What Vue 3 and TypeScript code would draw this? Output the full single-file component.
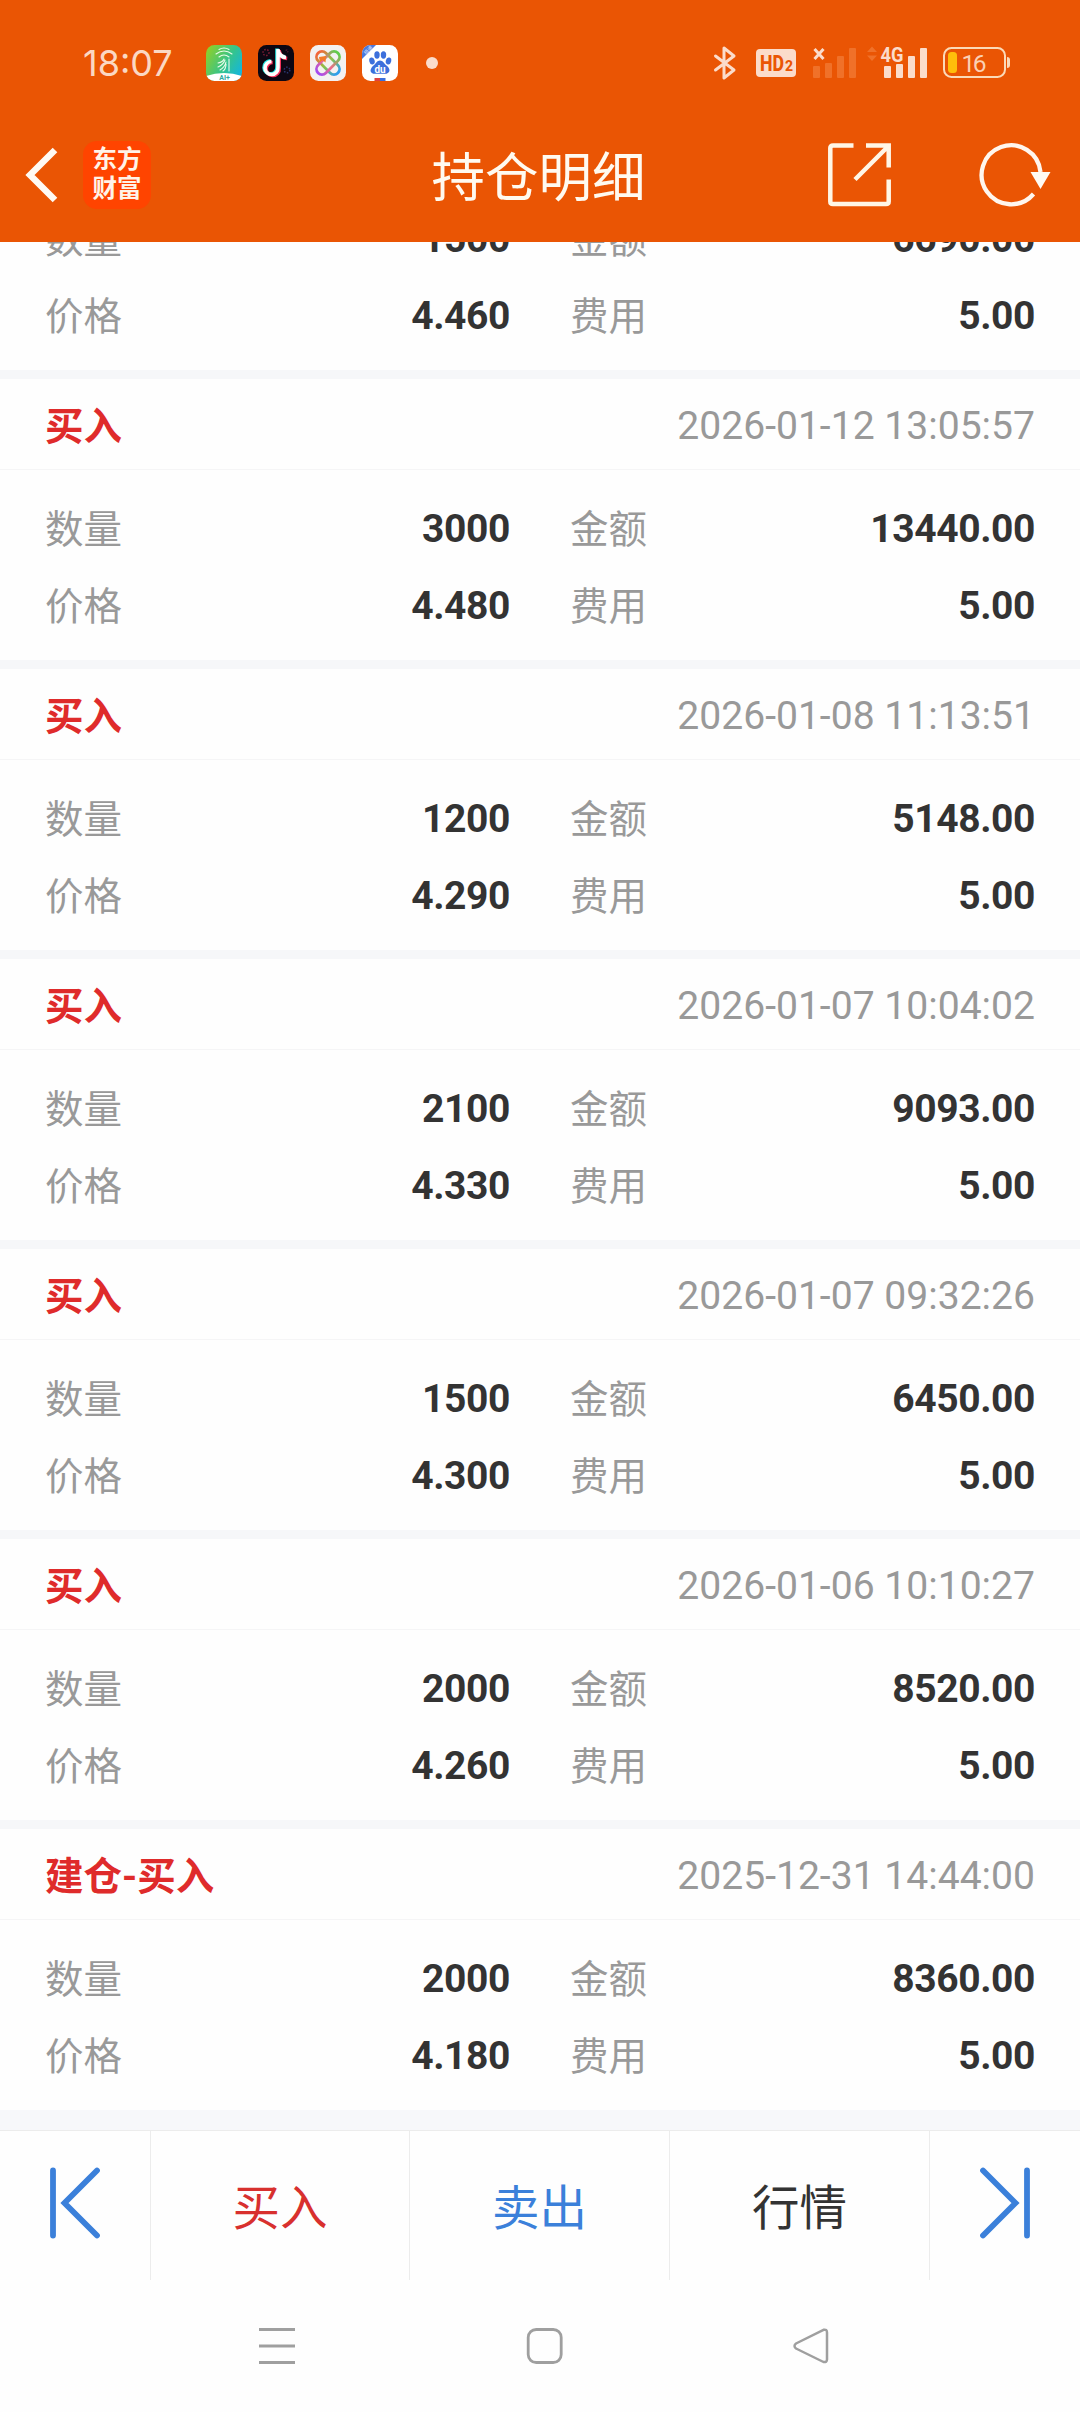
<script setup lang="ts">
interface Trade {
  type?: string
  time?: string
  count: string
  amount: string
  price: string
  fee: string
}

const trades: Trade[] = [
  { count: '1500', amount: '6690.00', price: '4.460', fee: '5.00' },
  { type: '买入', time: '2026-01-12 13:05:57', count: '3000', amount: '13440.00', price: '4.480', fee: '5.00' },
  { type: '买入', time: '2026-01-08 11:13:51', count: '1200', amount: '5148.00', price: '4.290', fee: '5.00' },
  { type: '买入', time: '2026-01-07 10:04:02', count: '2100', amount: '9093.00', price: '4.330', fee: '5.00' },
  { type: '买入', time: '2026-01-07 09:32:26', count: '1500', amount: '6450.00', price: '4.300', fee: '5.00' },
  { type: '买入', time: '2026-01-06 10:10:27', count: '2000', amount: '8520.00', price: '4.260', fee: '5.00' },
  { type: '建仓-买入', time: '2025-12-31 14:44:00', count: '2000', amount: '8360.00', price: '4.180', fee: '5.00' },
]
</script>

<template>
  <div class="screen">
    <header class="top">
      <div class="status">
        <span class="clock">18:07</span>
        <div class="apps">
          <svg width="36" height="36" viewBox="0 0 36 36">
            <defs>
              <linearGradient id="ga" x1="0" y1="0.2" x2="1" y2="0.8">
                <stop offset="0" stop-color="#8ccf2c" />
                <stop offset="0.55" stop-color="#35c48c" />
                <stop offset="1" stop-color="#12b5e2" />
              </linearGradient>
              <clipPath id="ca"><rect width="36" height="36" rx="8.5" /></clipPath>
            </defs>
            <g clip-path="url(#ca)">
              <rect width="36" height="36" fill="url(#ga)" />
              <path d="M0 31Q18 25 36 31V36H0Z" fill="#fff" />
              <g fill="none" stroke="#e9fbe9" stroke-width="1.1" stroke-linecap="round">
                <path d="M13 4.500Q18 1.500 23 4.500M10 9Q18 3 26 9M13 12Q18 8 23 12" />
                <path d="M12 18Q17 17 18 14M12 22Q17 20 19 15M14 25Q19 22 20 17M17 26Q20 24 20 19M23 14V26" />
              </g>
              <text x="18.500" y="34.500" font-size="7" font-weight="700" text-anchor="middle" fill="#2ba8a0">AI+</text>
            </g>
          </svg>
          <svg width="36" height="36" viewBox="0 0 36 36">
            <rect width="36" height="36" rx="8.500" fill="#0d0713" />
            <g fill="none" stroke-width="1.500" stroke-dasharray="1.500 1.500">
              <circle cx="8" cy="7.500" r="3" stroke="#7a1c34" />
              <circle cx="29" cy="25" r="2.800" stroke="#28356f" />
              <circle cx="29" cy="6" r="1" stroke="#45152c" />
            </g>
            <g fill="none" stroke-width="3.600">
              <path d="M20 4V22.500A6.500 6.500 0 1 1 13.500 16.500M20 5Q21.500 12 28 12.500" stroke="#25e8e4" transform="translate(-1 -.600)" />
              <path d="M20 4V22.500A6.500 6.500 0 1 1 13.500 16.500M20 5Q21.500 12 28 12.500" stroke="#f4325b" transform="translate(1.200 1)" />
              <path d="M20 4V22.500A6.500 6.500 0 1 1 13.500 16.500M20 5Q21.500 12 28 12.500" stroke="#fff" />
            </g>
          </svg>
          <svg width="36" height="36" viewBox="0 0 36 36">
            <defs>
              <linearGradient id="gc" x1="0" y1="0" x2="1" y2="0">
                <stop offset="0" stop-color="#f4653a" />
                <stop offset="0.500" stop-color="#8bc34a" />
                <stop offset="1" stop-color="#2b9df0" />
              </linearGradient>
              <linearGradient id="gd" x1="0" y1="0" x2="1" y2="0">
                <stop offset="0" stop-color="#a44bf0" />
                <stop offset="0.450" stop-color="#f06a8a" />
                <stop offset="1" stop-color="#5fce4a" />
              </linearGradient>
            </defs>
            <rect width="36" height="36" rx="8.500" fill="#f3f1f1" />
            <g fill="none" stroke-width="2.800">
              <rect x="4" y="12.500" width="28" height="11" rx="5.500" transform="rotate(45 18 18)" stroke="url(#gc)" />
              <rect x="4" y="12.500" width="28" height="11" rx="5.500" transform="rotate(-45 18 18)" stroke="url(#gd)" />
            </g>
            <path d="M9 12L16 11L15.500 17.500L12.500 15L10 17.500Z" fill="#f47a28" />
          </svg>
          <svg width="36" height="36" viewBox="0 0 36 36">
            <defs><clipPath id="cb"><rect width="36" height="36" rx="8.500" /></clipPath></defs>
            <g clip-path="url(#cb)">
              <rect width="36" height="36" fill="#fff" />
              <path d="M0 0H14L0 14Z" fill="#4b78dd" />
              <text transform="translate(4 10) rotate(-45)" font-size="5" fill="#dce6ff">极速</text>
              <g fill="#3c6fdc">
                <ellipse cx="10" cy="16" rx="2.700" ry="3.500" transform="rotate(-15 10 16)" />
                <ellipse cx="15" cy="10" rx="2.700" ry="3.700" />
                <ellipse cx="21.500" cy="10" rx="2.700" ry="3.700" />
                <ellipse cx="26.500" cy="16" rx="2.700" ry="3.500" transform="rotate(15 26.500 16)" />
                <path d="M18 15.500C21 15.500 22 18.500 24.500 20.500C30 25 27 29 23 28.800C20 28.600 16 28.600 13 28.800C8.500 29 6.500 25 11.500 20.500C14 18.500 15 15.500 18 15.500Z" />
              </g>
              <text x="18" y="27.500" font-size="10" font-weight="700" text-anchor="middle" fill="#fff">du</text>
              <rect x="12.500" y="33" width="5.500" height="3" fill="#e0413f" />
              <rect x="18" y="33" width="5.500" height="3" fill="#3c6fdc" />
            </g>
          </svg>
        </div>
        <i class="dot"></i>
        <div class="signals">
          <svg width="22" height="34" viewBox="0 0 22 34">
            <path d="M1.500 10L20 24L10 32V2L20 10L1.500 24" fill="none" stroke="#fbdccb" stroke-width="3" stroke-linejoin="round" stroke-linecap="round" />
          </svg>
          <svg class="hd" width="40" height="28" viewBox="0 0 40 28">
            <rect width="40" height="28" rx="4" fill="#fbdccb" />
            <text x="4" y="22" font-size="21.500" font-weight="800" textLength="24" lengthAdjust="spacingAndGlyphs" fill="#ea5504">HD</text>
            <text x="29" y="22" font-size="14" font-weight="800" fill="#ea5504">2</text>
          </svg>
          <svg class="sim1" width="44" height="34" viewBox="0 0 44 34">
            <path d="M1.500 3L10.500 13M10.500 3L1.500 13" stroke="#fbdccb" stroke-width="3" />
            <g fill="#f07129">
              <rect x="0" y="20" width="7" height="12" rx="1" />
              <rect x="12" y="17" width="7" height="15" rx="1" />
              <rect x="24" y="10" width="7" height="22" rx="1" />
              <rect x="36" y="2" width="7" height="30" rx="1" />
            </g>
          </svg>
          <svg class="sim2" width="60" height="34" viewBox="0 0 60 34">
            <path d="M0 6L5 .500L10 6ZM0 9.500H10L5 15Z" fill="#f07129" />
            <g fill="#fbdccb">
              <rect x="17" y="20" width="7" height="12" rx="1" />
              <rect x="29" y="18" width="7" height="14" rx="1" />
              <rect x="41" y="10" width="7" height="22" rx="1" />
              <rect x="53" y="2" width="7" height="30" rx="1" />
              <text x="13.500" y="15.500" font-size="21" font-weight="700" textLength="23" lengthAdjust="spacingAndGlyphs">4G</text>
            </g>
          </svg>
          <svg class="battery" width="68" height="32" viewBox="0 0 68 32">
            <rect x="1" y="1" width="61" height="29" rx="7.500" fill="none" stroke="#fbdab8" stroke-width="2" />
            <rect x="5" y="5" width="9" height="21" rx="3.500" fill="#ffbe0b" />
            <path d="M64 10Q67 10 67 13V18Q67 21 64 21Z" fill="#fbdab8" />
            <text x="18.500" y="24.500" font-size="24.500" textLength="25" fill="#fbd0b4">16</text>
          </svg>
        </div>
      </div>

      <div class="toolbar">
        <div class="side">
          <svg class="back" width="36" height="60" viewBox="0 0 36 60">
            <path d="M31 5L6 30L31 55" fill="none" stroke="#fffaf3" stroke-width="6.500" />
          </svg>
          <div class="logo"><span>东方</span><span>财富</span></div>
        </div>
        <h1>持仓明细</h1>
        <div class="side end">
          <svg class="share" width="64" height="64" viewBox="0 0 64 64">
            <g fill="none" stroke="#fff6e6" stroke-width="4.500">
              <path d="M25.500 2.500H5Q2.300 2.500 2.300 5V58.500Q2.300 61 5 61H58Q60.700 61 60.700 58.500V36.500" />
              <path d="M38 2.500H60.700V24.500M27 36.500L60 3.500" />
            </g>
          </svg>
          <svg width="74" height="66" viewBox="0 0 74 66">
            <path d="M54.500 52A29.500 29.500 0 1 1 61.500 30" fill="none" stroke="#fff6ee" stroke-width="4.300" />
            <path d="M51.500 30H71.500L61.500 47Z" fill="#fffaf3" />
          </svg>
        </div>
      </div>
    </header>

    <main class="viewport">
      <section v-for="(t, i) in trades" :key="i" class="trade">
        <div v-if="t.type" class="head">
          <b>{{ t.type }}</b>
          <time>{{ t.time }}</time>
        </div>
        <div class="body">
          <div class="cell"><span>数量</span><strong>{{ t.count }}</strong></div>
          <div class="cell"><span>金额</span><strong>{{ t.amount }}</strong></div>
          <div class="cell"><span>价格</span><strong>{{ t.price }}</strong></div>
          <div class="cell"><span>费用</span><strong>{{ t.fee }}</strong></div>
        </div>
      </section>
    </main>

    <nav class="actions">
      <button class="edge">
        <svg width="52" height="72" viewBox="0 0 52 72">
          <path d="M4 3.500V68.500M48 3.500L15.500 36L48 68.500" fill="none" stroke="#3b80da" stroke-width="5.800" stroke-linecap="round" />
        </svg>
      </button>
      <button class="buy">买入</button>
      <button class="sell">卖出</button>
      <button class="quote">行情</button>
      <button class="edge">
        <svg width="52" height="72" viewBox="0 0 52 72">
          <path d="M48 3.500V68.500M4 3.500L36.500 36L4 68.500" fill="none" stroke="#3b80da" stroke-width="5.800" stroke-linecap="round" />
        </svg>
      </button>
    </nav>

    <footer class="system">
      <svg width="36" height="36" viewBox="0 0 36 36">
        <path d="M0 1.500H36M0 18H36M0 34.500H36" stroke="#9f9f9f" stroke-width="3" />
      </svg>
      <svg width="36" height="36" viewBox="0 0 36 36">
        <rect x="2.200" y="1.500" width="33" height="33" rx="8" fill="none" stroke="#9f9f9f" stroke-width="2.800" />
      </svg>
      <svg width="36" height="36" viewBox="0 0 36 36">
        <path d="M30.500 1.800L3 15.500Q0 18 3 20.500L30.500 34Q34 34.500 34 31.500V4.500Q34 1 30.500 1.800Z" fill="none" stroke="#9f9f9f" stroke-width="2.500" stroke-linejoin="round" />
      </svg>
    </footer>
  </div>
</template>

<style>
body {
  background: #fefefe;
}
</style>

<style scoped>
.screen {
  width: 1080px;
  height: 2412px;
  display: flex;
  flex-direction: column;
  overflow: hidden;
  background: #fefefe;
  font-family: Roboto, 'Noto Sans CJK SC', sans-serif;
}
svg {
  display: block;
  flex: none;
  overflow: visible;
}
.top {
  height: 242px;
  flex: none;
  background: #ea5504;
}
.status {
  height: 108px;
  display: flex;
  align-items: center;
  padding: 17px 69px 0 83px;
  box-sizing: border-box;
}
.clock {
  width: 123px;
  font-family: Inter, Roboto, sans-serif;
  font-size: 36px;
  line-height: 40px;
  color: #fbd8c3;
}
.apps {
  display: flex;
  gap: 16px;
}
.dot {
  width: 12px;
  height: 12px;
  margin-left: 28px;
  border-radius: 50%;
  background: #fbdccb;
}
.signals {
  display: flex;
  align-items: center;
  margin-left: auto;
}
.hd {
  margin-left: 20px;
}
.sim1 {
  margin-left: 17px;
}
.sim2 {
  margin-left: 10px;
}
.battery {
  margin-left: 16px;
}
.toolbar {
  height: 134px;
  display: flex;
  align-items: center;
  justify-content: space-between;
  padding: 0 27px 0 24px;
}
.side {
  width: 300px;
  display: flex;
  align-items: center;
}
.end {
  justify-content: flex-end;
}
.logo {
  width: 68px;
  height: 68px;
  margin-left: 23px;
  border-radius: 14px;
  background: #ff4400;
  color: #fff3e8;
  display: flex;
  flex-direction: column;
  align-items: center;
  justify-content: center;
  box-sizing: border-box;
  padding-bottom: 6px;
  font: 700 24.500px/29px 'Noto Sans CJK SC', sans-serif;
}
.share {
  margin-right: 87px;
}
h1 {
  margin: 0;
  padding-top: 8px;
  font-size: 53.500px;
  font-weight: 400;
  line-height: 70px;
  color: #fffaf0;
}
.viewport {
  flex: 1;
  min-height: 0;
  display: flex;
  flex-direction: column;
  justify-content: flex-end;
  overflow: hidden;
  padding-bottom: 20px;
  background: linear-gradient(#f7f8fa, #f7f8fa) bottom / 100% 20px no-repeat;
}
.trade {
  flex: none;
}
.trade + .trade {
  border-top: 9px solid #f6f7f9;
}
.head {
  height: 90px;
  display: flex;
  align-items: center;
  justify-content: space-between;
  padding: 0 45px;
  border-bottom: 1px solid #f5f5f6;
  font-size: 39px;
}
.head b {
  padding-bottom: 2px;
  font-size: 38.500px;
  color: #df2b2b;
  font-weight: 700;
}
.head time {
  padding-top: 3px;
  font-size: 39.100px;
  color: #999;
}
.body {
  display: grid;
  grid-template-columns: 1fr 1fr;
  grid-auto-rows: 77px;
  column-gap: 60px;
  padding: 20px 45px 16px;
}
.cell {
  display: flex;
  align-items: center;
  justify-content: space-between;
  font-size: 39px;
  color: #999;
}
.cell span {
  padding-bottom: 6px;
  font-size: 38.500px;
}
.cell strong {
  color: #333;
  font-weight: 700;
  letter-spacing: -0.4px;
}
.actions {
  height: 150px;
  flex: none;
  box-sizing: border-box;
  border-top: 1px solid #ececec;
  display: grid;
  grid-template-columns: 151px 259px 260px 260px 150px;
}
.actions button {
  border: 0;
  border-right: 1px solid #ececec;
  padding: 0 0 2px;
  background: none;
  font: 400 47.500px/64px 'Noto Sans CJK SC', sans-serif;
}
.actions .edge {
  display: flex;
  align-items: center;
  justify-content: center;
  padding-bottom: 5px;
}
.actions button:last-child {
  border-right: 0;
}
.actions .buy {
  color: #d8302e;
}
.actions .sell {
  color: #3b80da;
}
.actions .quote {
  color: #333;
}
.system {
  height: 132px;
  flex: none;
  display: flex;
  align-items: center;
  justify-content: space-between;
  padding: 0 251px 0 259px;
}
</style>
